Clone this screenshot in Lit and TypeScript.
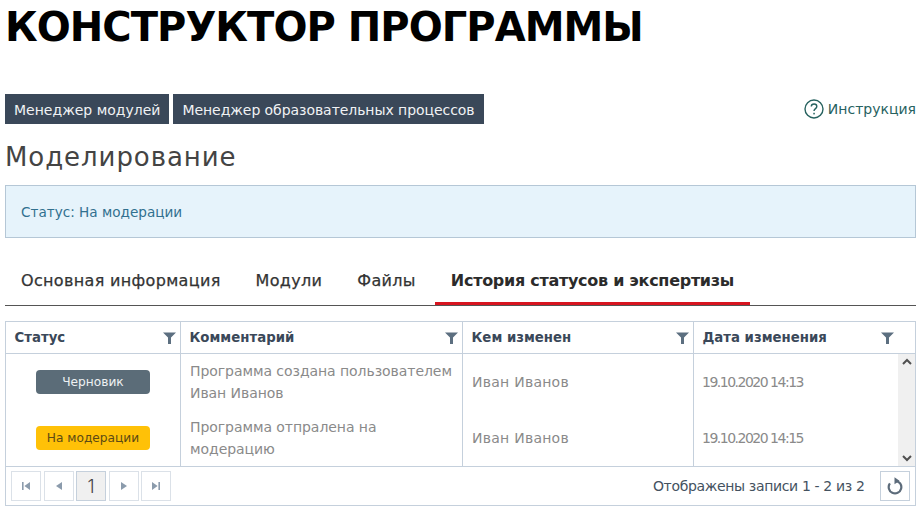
import { LitElement, html, css } from "lit";
import { customElement } from "lit/decorators.js";

const filter = html`<svg class="filter" viewBox="0 0 13 12"><path d="M0 0.5h13L8 5.5V12H5V5.5z" /></svg>`;

@customElement("app-root")
export class AppRoot extends LitElement {
  static styles = css`
    :host { display: block; width: 921px; height: 514px; overflow: hidden; background: #fff; font-family: "DejaVu Sans", sans-serif; color: #333; }
    * { box-sizing: border-box; }
    .page { padding: 0 5px; display: flex; flex-direction: column; }
    h1 { margin: 0; height: 94px; padding-top: 3px; font-size: 40px; line-height: 48px; font-weight: 700; color: #000; letter-spacing: -0.95px; white-space: nowrap; }
    .toolbar { display: flex; align-items: center; height: 30px; gap: 4px; }
    .btn { height: 30px; padding: 1px 9px 0; display: flex; align-items: center; background: #3a4859; color: #f0f2f4; font-size: 14px; white-space: nowrap; }
    .btn.wide { letter-spacing: -0.06px; }
    .help { margin-left: auto; display: flex; align-items: center; gap: 4px; font-size: 14px; color: #27625f; }
    .help svg { width: 20px; height: 20px; }
    h2 { margin: 0; height: 61px; padding-top: 16px; font-size: 26px; line-height: 34px; font-weight: 400; color: #444; letter-spacing: 0.93px; }
    .alert { height: 53px; display: flex; align-items: center; padding: 0 15px; background: #e6f3fb; border: 1px solid #b5c7d6; font-size: 13.6px; color: #31708f; }
    .tabs { display: flex; height: 68px; padding-top: 25px; border-bottom: 1px solid #555; gap: 3px; }
    .tab { padding: 8px 16px 0; height: 42px; font-size: 16px; color: #333; white-space: nowrap; line-height: 20px; letter-spacing: 0.33px; -webkit-text-stroke: 0.25px #333; }
    .tab.active { font-weight: 700; border-bottom: 3px solid #d7141f; color: #2b2b2b; letter-spacing: -0.28px; -webkit-text-stroke: 0; }
    .grid { margin-top: 15px; width: 911px; height: 185px; border: 1px solid #c5d0dc; display: flex; flex-direction: column; font-size: 14px; }
    .row { display: grid; grid-template-columns: 175px 282px 231px 1fr; }
    .head { height: 32px; border-bottom: 1px solid #c5d0dc; flex: none; }
    .hc { display: flex; align-items: center; justify-content: space-between; padding: 0 4px 0 8.5px; border-right: 1px solid #c5d0dc; font-size: 13.3px; font-weight: 700; color: #3a4859; white-space: nowrap; }
    .hc:last-child { border-right: 0; padding-right: 21px; }
    .filter { width: 13px; height: 12px; fill: #5c6f80; flex: none; }
    .body { height: 112px; position: relative; flex: none; }
    .drow { height: 56px; }
    .c { padding: 0 9px; display: flex; align-items: center; border-right: 1px solid #c5d0dc; color: #8a8a8a; line-height: 22px; white-space: nowrap; letter-spacing: -0.06px; }
    .c:last-child { border-right: 0; }
    .c.name { letter-spacing: 0.25px; }
    .c.date { letter-spacing: -1.5px; padding-left: 8px; }
    .c.st { justify-content: center; padding: 0; }
    .badge { width: 114px; height: 24px; border-radius: 4px; display: flex; align-items: center; justify-content: center; font-size: 12.2px; letter-spacing: 0; }
    .gray { background: #5b6c78; color: #eef1f3; }
    .amber { background: #ffc107; color: #5c4a14; }
    .scroll { position: absolute; right: 0; top: 0; bottom: 0; width: 17px; background: #f0f0f0; display: flex; flex-direction: column; justify-content: space-between; align-items: center; padding: 4px 0; }
    .scroll svg { width: 10px; height: 8px; fill: none; stroke: #505050; stroke-width: 2; }
    .foot { flex: 1; border-top: 1px solid #c5d0dc; display: flex; align-items: center; padding: 0 5px; gap: 2.5px; }
    .pg { width: 30px; height: 30px; border: 1px solid #dbe1e8; display: flex; align-items: center; justify-content: center; color: #444; font-family: Inter, sans-serif; font-size: 18px; font-weight: 300; }
    .pg svg { width: 10px; height: 10px; fill: #8b9bac; }
    .pg.cur { background: #f0f0f0; border-color: #c5d0dc; }
    .info { margin-left: auto; font-size: 14px; color: #44525f; margin-right: 13px; letter-spacing: -0.35px; }
    .ref { width: 30px; height: 30px; border: 1px solid #c5d0dc; display: flex; align-items: center; justify-content: center; }
    .ref svg { width: 18px; height: 18px; }
  `;

  render() {
    return html`<div class="page">
      <h1>КОНСТРУКТОР ПРОГРАММЫ</h1>
      <div class="toolbar">
        <div class="btn">Менеджер модулей</div>
        <div class="btn wide">Менеджер образовательных процессов</div>
        <div class="help">
          <svg viewBox="0 0 20 20"><circle cx="10" cy="10" r="9" fill="none" stroke="#27625f" stroke-width="1.4"/><path d="M7.3 7.6c0-1.6 1.2-2.6 2.8-2.6s2.7 1 2.7 2.4c0 2.2-2.8 2.2-2.8 4.6" fill="none" stroke="#27625f" stroke-width="1.4"/><rect x="9.3" y="13.8" width="1.5" height="1.6" fill="#27625f"/></svg>
          <span>Инструкция</span>
        </div>
      </div>
      <h2>Моделирование</h2>
      <div class="alert">Статус: На модерации</div>
      <div class="tabs">
        <div class="tab">Основная информация</div>
        <div class="tab">Модули</div>
        <div class="tab">Файлы</div>
        <div class="tab active">История статусов и экспертизы</div>
      </div>
      <div class="grid">
        <div class="row head">
          <div class="hc">Статус ${filter}</div>
          <div class="hc">Комментарий ${filter}</div>
          <div class="hc">Кем изменен ${filter}</div>
          <div class="hc">Дата изменения ${filter}</div>
        </div>
        <div class="body">
          <div class="row drow">
            <div class="c st"><div class="badge gray">Черновик</div></div>
            <div class="c"><span>Программа создана пользователем<br />Иван Иванов</span></div>
            <div class="c name">Иван Иванов</div>
            <div class="c date">19.10.2020 14:13</div>
          </div>
          <div class="row drow">
            <div class="c st"><div class="badge amber">На модерации</div></div>
            <div class="c"><span>Программа отпралена на<br />модерацию</span></div>
            <div class="c name">Иван Иванов</div>
            <div class="c date">19.10.2020 14:15</div>
          </div>
          <div class="scroll">
            <svg viewBox="0 0 10 8"><path d="M1 6l4-4 4 4"/></svg>
            <svg viewBox="0 0 10 8"><path d="M1 2l4 4 4-4"/></svg>
          </div>
        </div>
        <div class="foot">
          <div class="pg"><svg viewBox="0 0 10 10"><path d="M1 1h1.6v8H1zM9 1v8L3.4 5z"/></svg></div>
          <div class="pg"><svg viewBox="0 0 10 10"><path d="M8 1v8L2 5z"/></svg></div>
          <div class="pg cur">1</div>
          <div class="pg"><svg viewBox="0 0 10 10"><path d="M2 1v8l6-4z"/></svg></div>
          <div class="pg"><svg viewBox="0 0 10 10"><path d="M1 1v8l5.6-4zM7.4 1H9v8H7.4z"/></svg></div>
          <div class="info">Отображены записи 1 - 2 из 2</div>
          <div class="ref"><svg viewBox="0 0 18 18"><path d="M9.5 3.8a6.3 6.3 0 1 1-5.6 2.6" fill="none" stroke="#5c6b7a" stroke-width="2.2"/><path d="M8.5 0.3l5 3.5-5 3.5z" fill="#5c6b7a"/></svg></div>
        </div>
      </div>
    </div>`;
  }
}
